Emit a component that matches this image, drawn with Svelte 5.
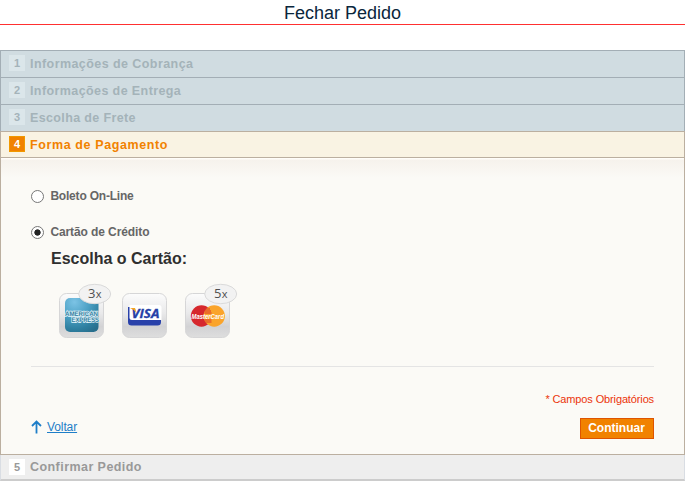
<script>
  const previous = [
    { title: 'Informações de Cobrança', spacing: 0.43 },
    { title: 'Informações de Entrega', spacing: 0.4 },
    { title: 'Escolha de Frete', spacing: 0.36 }
  ];
  let method = $state('card');
</script>

<main>
  <h1>Fechar Pedido</h1>
  <ol class="steps">
    {#each previous as step, i}
      <li class="step done"><span class="number">{i + 1}</span><h2 style="letter-spacing: {step.spacing}px">{step.title}</h2></li>
    {/each}
    <li class="active">
      <div class="step current"><span class="number">4</span><h2>Forma de Pagamento</h2></div>
      <form onsubmit={(e) => e.preventDefault()}>
        <label class="first"><input type="radio" value="boleto" bind:group={method} /><span>Boleto On-Line</span></label>
        <label class="second"><input type="radio" value="card" bind:group={method} /><span>Cartão de Crédito</span></label>
        <h3>Escolha o Cartão:</h3>
        <div class="cards">
          {#each ['amex', 'visa', 'master'] as brand}
            <svg class="card" width="63" height="56" viewBox="0 0 63 56" role="img" aria-label={brand}>
              <defs>
                <linearGradient id="{brand}-silver" x2="0" y2="1">
                  <stop stop-color="#fcfcfc" /><stop offset=".45" stop-color="#e9e9ea" /><stop offset=".75" stop-color="#d2d2d4" /><stop offset="1" stop-color="#dedede" />
                </linearGradient>
                <radialGradient id="{brand}-blue" cx=".28" cy=".12" r="1">
                  <stop stop-color="#7cc3e5" /><stop offset=".45" stop-color="#4ba0c4" /><stop offset=".8" stop-color="#2e7fa0" /><stop offset="1" stop-color="#286f8d" />
                </radialGradient>
              </defs>
              <rect x="9.5" y="9.5" width="44" height="44" rx="7" fill="url(#{brand}-silver)" stroke="#d6d6d7" />
              {#if brand === 'amex'}
                <rect x="15" y="14" width="33.5" height="34" rx="5" fill="url(#{brand}-blue)" />
                <g class="amex" text-rendering="geometricPrecision">
                  <text x="15" y="31.5" textLength="33" lengthAdjust="spacingAndGlyphs">AMERICAN</text>
                  <text x="21.5" y="38.3" textLength="27.5" lengthAdjust="spacingAndGlyphs">EXPRESS</text>
                </g>
              {:else if brand === 'visa'}
                <path d="M15 23h33v15q0 3.5-3.5 3.5h-26q-3.5 0-3.5-3.5z" fill="#2941aa" />
                <path d="M16.5 21H46q2.5 0 2.5 2.500V36H19q-2.5 0-2.5-2.5z" fill="#fff" />
                <text class="visa" x="18.5" y="33.5" textLength="28" lengthAdjust="spacingAndGlyphs">VISA</text>
                <path d="M17 24h5l1.5 5q-2-3.5-6.5-5" fill="#f7a51f" />
              {:else}
                <circle cx="25.5" cy="32" r="10.7" fill="#d6272d" />
                <circle cx="38.2" cy="32" r="10.7" fill="#faa42b" />
                <path d="M29 25h5m-5.5 2h6.5m-6.5 2h7m-7 7h7m-6.5 2h6.5" stroke="#d9362a" stroke-width="1" />
                <text class="master" x="15.5" y="34.7" textLength="32.5" lengthAdjust="spacingAndGlyphs">MasterCard</text>
              {/if}
              {#if brand !== 'visa'}
                <ellipse cx="44.7" cy="10" rx="16" ry="9.7" fill="#f2f2f2" stroke="#dadada" />
                <text class="count" x="38" y="14" textLength="13.5">{brand === 'amex' ? '3' : '5'}<tspan font-size="11">x</tspan></text>
              {/if}
            </svg>
          {/each}
        </div>
        <footer>
          <p>* Campos Obrigatórios</p>
          <div class="actions">
            <a href="#voltar"><svg width="11" height="14" viewBox="0 0 11 14"><path d="M5.5 13.5V1.5M1 6 5.5 1.5 10 6" fill="none" stroke="#1e7ec8" stroke-width="1.8" /></svg><span>Voltar</span></a>
            <button>Continuar</button>
          </div>
        </footer>
      </form>
    </li>
    <li class="step last"><span class="number">5</span><h2>Confirmar Pedido</h2></li>
  </ol>
</main>

<style>
  :global(body) { background: #fff; overflow: hidden; }
  main { font-family: "Liberation Sans", Arial, sans-serif; width: 685px; height: 482px; }
  h1, h2, h3, p { margin: 0; }
  h1 { height: 24px; border-bottom: 1px solid #ff3030; color: #0a263c; font-size: 18px; font-weight: 400; line-height: 26px; text-align: center; }
  .steps { list-style: none; padding: 0; margin: 25px 0 0; }
  .step { display: flex; align-items: flex-start; box-sizing: border-box; height: 27px; padding: 5px 8px 0; border: 1px solid #a3aeb5; border-bottom: 0; }
  .step .number { flex: none; box-sizing: border-box; width: 16px; height: 16px; margin: -1px 5px 0 0; font: bold 11px/16px "Liberation Sans", Arial, sans-serif; text-align: center; }
  .step h2 { font-size: 12.5px; line-height: 17px; letter-spacing: .44px; white-space: nowrap; }
  .done { background: #d0dce1; color: #a4b3b9; }
  .done .number { background: #dbe6ea; }
  .current { height: 26px; background: #f9f3e3; color: #f18200; border-color: #bbafa0; }
  .current h2 { letter-spacing: .61px; }
  .current .number { background: #f18200; color: #fff; border: 1px solid #f19900; line-height: 14px; }
  form { box-sizing: border-box; height: 298px; padding: 30px 30px 0; border: 1px solid #bbafa0; background: linear-gradient(#fffdf9 0 1px, #f6f2ec 2px, #fbfaf6 20px); }
  label { display: flex; height: 16px; align-items: center; color: #666; font-size: 12px; font-weight: bold; line-height: 16px; }
  label span { margin-left: 6px; }
  .first { letter-spacing: -.2px; }
  input { box-sizing: border-box; width: 13px; height: 13px; margin: 0 0 0 .4px; appearance: none; border: 1px solid #777; border-radius: 50%; background: #fff; }
  input:checked { background: radial-gradient(circle, #222 0 2.8px, #fff 3.5px); }
  .second { margin-top: 20px; letter-spacing: -.1px; }
  h3 { margin: 10px 0 0 20px; color: #2f2f2f; font-size: 16px; line-height: 18px; }
  .cards { display: flex; margin: 16px 0 0 19px; }
  .card { flex: none; overflow: visible; }
  .amex { fill: #327ea0; stroke: #e3f4fa; stroke-width: 1.4px; paint-order: stroke; font: bold 6.5px "Liberation Sans", sans-serif; }
  .visa { fill: #2540a7; stroke: #2540a7; stroke-width: .3px; font: italic bold 13px "Open Sans", sans-serif; }
  .master { fill: #fff; font: italic bold 7px "Liberation Sans", sans-serif; }
  .count { fill: #505050; font: 13px "Open Sans", sans-serif; }
  footer { margin-top: 26px; border-top: 1px solid #e4e4e4; }
  p { margin-top: 26px; font-size: 11px; line-height: 13px; letter-spacing: -.13px; color: #eb340a; text-align: right; }
  .actions { display: flex; justify-content: space-between; align-items: flex-start; margin-top: 12px; }
  a { display: flex; align-items: center; margin-top: 1px; color: #1e7ec8; font-size: 12px; line-height: 16px; letter-spacing: -.1px; text-decoration: none; }
  a span { margin-left: 5px; text-decoration: underline; }
  button { width: 74px; height: 21px; padding: 0 1px 0 0; border: 1px solid #de5400; background: #f18200; color: #fff; font: bold 12px/17px "Liberation Sans", Arial, sans-serif; text-align: center; }
  .last { height: 26px; background: #eee; color: #999; border: solid #d9dde3; border-width: 0 1px 2px; border-bottom-color: #ccc; padding-top: 4px; }
  .last .number { background: #fff; margin-top: 0; }
</style>
